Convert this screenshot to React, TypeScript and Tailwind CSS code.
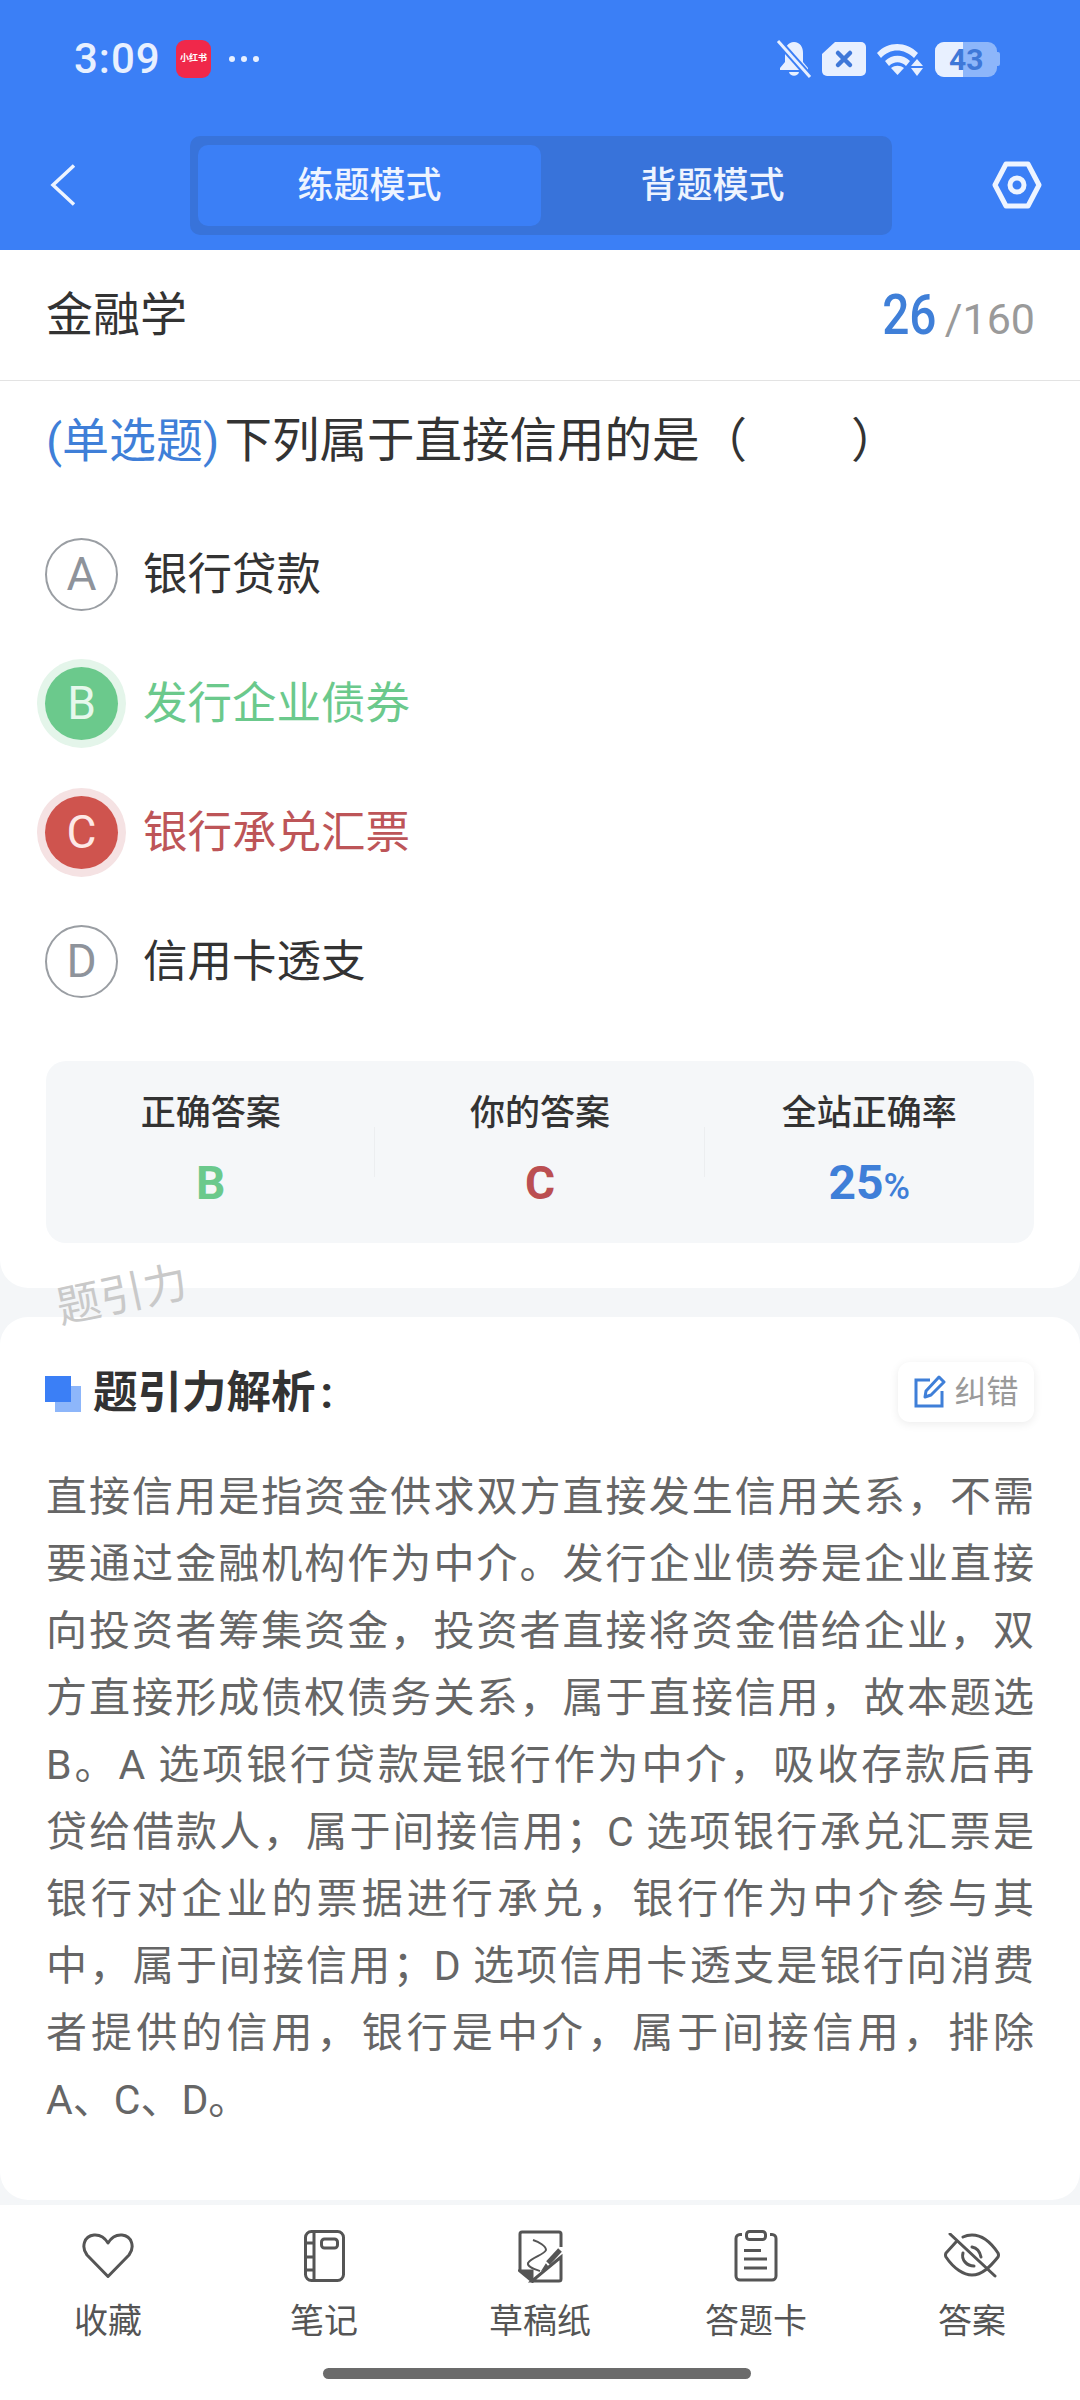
import React from 'react';

const cjk = { fontFamily: 'Roboto, "Noto Sans CJK SC", sans-serif' };

const StatusBar: React.FC = () => (
    <div className="h-[118px] pl-[74px] pr-[80px] pt-[38px] flex items-start justify-between">
        <div className="flex items-center h-[42px]">
            <span className="text-[42px] leading-none font-medium text-[#e8f0ff] w-[86px] tracking-[1px]">3:09</span>
            <div className="ml-[16px] w-[35px] h-[38px] rounded-[9px] bg-[#f0284a] flex items-center justify-center text-[9px] font-bold text-white whitespace-nowrap">小红书</div>
            <div className="ml-[18px] flex gap-[6px]">
                <span className="w-[6px] h-[6px] rounded-full bg-[#e8f0ff]" />
                <span className="w-[6px] h-[6px] rounded-full bg-[#e8f0ff]" />
                <span className="w-[6px] h-[6px] rounded-full bg-[#e8f0ff]" />
            </div>
        </div>
        <div className="flex items-center h-[42px]">
            <svg width="38" height="40" viewBox="0 0 38 40">
                <path d="M19 3c6 0 9 5 9 11v9l5 6v2H5v-2l5-6v-9c0-6 3-11 9-11z" fill="#e8f0ff" />
                <path d="M14 33h10c-1 5-9 5-10 0z" fill="#e8f0ff" />
                <path d="M3 2l32 36" stroke="#3b7ff6" strokeWidth="7" />
                <path d="M3 2l32 36" stroke="#e8f0ff" strokeWidth="3" />
            </svg>
            <svg className="ml-[9px]" width="44" height="34" viewBox="0 0 44 34">
                <path d="M13 0h26a5 5 0 0 1 5 5v24a5 5 0 0 1-5 5H5a5 5 0 0 1-5-5V12z" fill="#e8f0ff" />
                <path d="M16 11l12 12M28 11L16 23" stroke="#3f78d8" strokeWidth="4.500" strokeLinecap="round" />
            </svg>
            <svg className="ml-[10px]" width="48" height="36" viewBox="0 0 48 36">
                <path d="M1 12C12 0 30 0 42 12l-4 5C28 7 14 7 5 17z" fill="#e8f0ff" />
                <path d="M9 20c7-7 18-7 25 0l-4 5c-5-5-12-5-17 0z" fill="#e8f0ff" />
                <path d="M15 27c4-3 9-3 13 0l-6.500 7z" fill="#e8f0ff" />
                <path d="M41 18l6 7H35zM35 27h12l-6 8z" fill="#e8f0ff" />
            </svg>
            <div className="relative ml-[11px] w-[62px] h-[35px] rounded-[9px] bg-[#8db6fa] overflow-hidden">
                <div className="absolute left-0 top-0 bottom-0 w-[28px] bg-[#e8f0ff]" />
                <span className="absolute left-[14px] top-[3px] text-[30px] leading-[30px] font-bold text-[#3f78d8]">43</span>
            </div>
            <div className="w-[3px] h-[14px] rounded-r-[2px] bg-[#8db6fa]" />
        </div>
    </div>
);

const Header: React.FC = () => (
    <div className="h-[250px] bg-[#3b7ff6]">
        <StatusBar />
        <div className="flex items-start">
            <div className="w-[190px] pl-[50px] pt-[46px]">
                <svg width="26" height="42" viewBox="0 0 26 42" fill="none">
                    <path d="M24 1.500L3 21l21 19.500" stroke="#eef4ff" strokeWidth="3.500" />
                </svg>
            </div>
            <div className="mt-[18px] w-[702px] h-[99px] rounded-[10px] bg-[#3873da] px-[8px] py-[9px] flex">
                <div className="w-[343px] rounded-[10px] bg-[#3b7ff6] flex items-center justify-center text-[36px] font-medium text-[#eef4ff]">练题模式</div>
                <div className="flex-1 flex items-center justify-center text-[36px] font-medium text-[#eef4ff]">背题模式</div>
            </div>
            <div className="pl-[100px] pt-[43px]">
                <svg width="50" height="48" viewBox="0 0 50 48" fill="none">
                    <path d="M14 3h22l11 21-11 21H14L3 24z" stroke="#eef4ff" strokeWidth="5" strokeLinejoin="round" />
                    <circle cx="25" cy="24" r="7" stroke="#eef4ff" strokeWidth="5" />
                </svg>
            </div>
        </div>
    </div>
);

const OptionRow: React.FC<{ letter: string; text: string; state?: 'right' | 'wrong' }> = ({ letter, text, state }) => {
    let circle = 'border-2 border-[#9a9ea3] text-[#8e939b]';
    let label = 'text-[#333333]';
    if (state === 'right') {
        circle = 'bg-[#6bc98c] text-[#e6f8ec] shadow-[0_0_0_8px_#e4f5ea]';
        label = 'text-[#6bc98c]';
    }
    if (state === 'wrong') {
        circle = 'bg-[#cf544e] text-[#fde8e6] shadow-[0_0_0_8px_#f5e2e3]';
        label = 'text-[#bd5558]';
    }
    return (
        <div className="h-[129px] flex items-center">
            <div className={`w-[73px] h-[73px] rounded-full flex items-center justify-center text-[46px] ${circle}`}>{letter}</div>
            <div className={`ml-[25px] mt-[2px] text-[44.500px] ${label}`}>{text}</div>
        </div>
    );
};

const StatCell: React.FC<{ title: string; divider?: boolean; children: React.ReactNode }> = ({ title, divider, children }) => (
    <div className="relative flex-1 flex flex-col items-center pt-[28px]">
        <div className="text-[35px] leading-[50px] font-medium text-[#333333]">{title}</div>
        <div className="mt-[19px] leading-[50px]">{children}</div>
        {divider && <div className="absolute right-0 top-[66px] h-[50px] w-[1px] bg-[#eceef0]" />}
    </div>
);

const Tool: React.FC<{ label: string; children: React.ReactNode }> = ({ label, children }) => (
    <div className="flex-1 flex flex-col items-center">
        <div className="h-[60px] flex items-center justify-center">{children}</div>
        <div className="mt-[12px] text-[34px] leading-[46px] text-[#555555]">{label}</div>
    </div>
);

const analysis = [
    '直接信用是指资金供求双方直接发生信用关系，不需',
    '要通过金融机构作为中介。发行企业债券是企业直接',
    '向投资者筹集资金，投资者直接将资金借给企业，双',
    '方直接形成债权债务关系，属于直接信用，故本题选',
    'B。A 选项银行贷款是银行作为中介，吸收存款后再',
    '贷给借款人，属于间接信用；C 选项银行承兑汇票是',
    '银行对企业的票据进行承兑，银行作为中介参与其',
    '中，属于间接信用；D 选项信用卡透支是银行向消费',
    '者提供的信用，银行是中介，属于间接信用，排除',
];

export default function App() {
    return (
        <div className="w-[1080px] h-[2400px] bg-[#f4f6f8] flex flex-col overflow-hidden relative" style={cjk}>
            <Header />

            <div className="bg-white rounded-b-[28px] h-[1038px] flex flex-col">
                <div className="h-[131px] pl-[46px] pr-[45px] flex items-center justify-between border-b border-[#e3e3e3]">
                    <div className="text-[47px] text-[#333333]">金融学</div>
                    <div className="flex items-baseline">
                        <span className="inline-block origin-right scale-x-[.87] text-[55px] font-medium text-[#3f7fd8]">26</span>
                        <span className="ml-[8px] text-[43px] text-[#9a9a9a]">/</span>
                        <span className="text-[43px] text-[#9a9a9a]">160</span>
                    </div>
                </div>

                <div className="px-[46px] pt-[27px]">
                    <div className="text-[47.500px] leading-[66px] text-[#333333] whitespace-pre">
                        <span className="text-[47px] text-[#3f7fd8]">(单选题)</span>
                        <span className="ml-[5px]">下列属于直接信用的是（</span>
                        <span className="inline-block w-[104px]" />
                        <span>）</span>
                    </div>
                    <div className="mt-[36px] ml-[-1px]">
                        <OptionRow letter="A" text="银行贷款" />
                        <OptionRow letter="B" text="发行企业债券" state="right" />
                        <OptionRow letter="C" text="银行承兑汇票" state="wrong" />
                        <OptionRow letter="D" text="信用卡透支" />
                    </div>
                    <div className="mt-[35px] h-[182px] rounded-[20px] bg-[#f5f7f9] flex">
                        <StatCell title="正确答案" divider>
                            <span className="text-[46px] font-bold text-[#6bc98c]">B</span>
                        </StatCell>
                        <StatCell title="你的答案" divider>
                            <span className="text-[46px] font-bold text-[#bb4f52]">C</span>
                        </StatCell>
                        <StatCell title="全站正确率">
                            <span className="text-[48px] font-bold text-[#3f7fd8]">25</span>
                            <span className="text-[36px] font-medium text-[#3f7fd8]">%</span>
                        </StatCell>
                    </div>
                </div>
            </div>

            <div className="absolute left-[56px] top-[1265px] -rotate-[12deg] text-[44px] leading-[60px] text-[#c9c9c9] z-10">题引力</div>

            <div className="mt-[29px] bg-white rounded-[28px] h-[883px] px-[46px]">
                <div className="h-[147px] flex items-center justify-between">
                    <div className="flex items-center pt-[6px]">
                        <div className="relative w-[36px] h-[36px] ml-[-1px]">
                            <div className="absolute right-0 bottom-0 w-[26px] h-[26px] bg-[#8db6fa]" />
                            <div className="absolute left-0 top-0 w-[26px] h-[26px] bg-[#3b7ff6]" />
                        </div>
                        <div className="ml-[12px] text-[44.500px] font-bold text-[#333333]">题引力解析<span className="ml-[5px]">:</span></div>
                    </div>
                    <div className="w-[136px] h-[60px] rounded-[12px] bg-white shadow-[0_2px_10px_rgba(0,0,0,0.08)] flex items-center justify-center mt-[2px]">
                        <svg width="34" height="34" viewBox="0 0 34 34" fill="none">
                            <path d="M17 5H3v26h26V16" stroke="#3f7fd8" strokeWidth="3" />
                            <path d="M12 22l1-6L26 2l5 5-13 13z" stroke="#3f7fd8" strokeWidth="3" strokeLinejoin="round" />
                        </svg>
                        <span className="ml-[7px] text-[32px] text-[#9a9a9a]">纠错</span>
                    </div>
                </div>
                <div className="text-[41px] leading-[67px] text-[#666666]">
                    {analysis.map((line) => (
                        <div key={line} className="h-[67px] text-justify [text-align-last:justify]">{line}</div>
                    ))}
                    <div className="h-[67px]">A、C、D。</div>
                </div>
            </div>

            <div className="mt-[5px] flex-1 bg-white">
                <div className="flex pt-[21px]">
                    <Tool label="收藏">
                        <svg width="52" height="46" viewBox="0 0 52 46" fill="none">
                            <path d="M26 43.500L5 22C-1 14 2 3 12 2c6-.5 11 3 14 8 3-5 8-8.500 14-8 10 1 13 12 7 20z" stroke="#555555" strokeWidth="3" strokeLinejoin="round" />
                        </svg>
                    </Tool>
                    <Tool label="笔记">
                        <svg width="41" height="52" viewBox="0 0 41 52" fill="none" stroke="#555555" strokeWidth="3">
                            <rect x="1.500" y="1.500" width="38" height="49" rx="6" />
                            <path d="M10 1.500v49M1.500 13h8.500M1.500 27h8.500M1.500 40h8.500" />
                            <rect x="17.500" y="9" width="16" height="9" rx="3" />
                        </svg>
                    </Tool>
                    <Tool label="草稿纸">
                        <svg width="45" height="53" viewBox="0 0 45 53" fill="none" stroke="#555555" strokeWidth="3">
                            <path d="M2 41V4a2 2 0 0 1 2-2h37a2 2 0 0 1 2 2v13M43 27v22a2 2 0 0 1-2 2H14z" />
                            <path d="M2 41l12 10V41z" fill="#555555" />
                            <path d="M15 10c6 2 13 6 13 10-2 5-14 7-18 13-1 4 6 6 12 8" strokeWidth="2" />
                            <path d="M42 20L30 33" strokeWidth="5" />
                            <path d="M28 35l-2.500 4 4-2z" strokeWidth="2" />
                        </svg>
                    </Tool>
                    <Tool label="答题卡">
                        <svg width="44" height="52" viewBox="0 0 44 52" fill="none" stroke="#555555" strokeWidth="3">
                            <path d="M8 4.500H6a4 4 0 0 0-4 4V46a4 4 0 0 0 4 4h32a4 4 0 0 0 4-4V8.500a4 4 0 0 0-4-4h-2" />
                            <rect x="12.500" y="1.500" width="19" height="8" rx="3" />
                            <path d="M10 20.500h17M10 29h23M10 38h23" />
                        </svg>
                    </Tool>
                    <Tool label="答案">
                        <svg width="56" height="46" viewBox="0 0 56 46" fill="none" stroke="#555555" strokeWidth="3" strokeLinecap="round">
                            <path d="M12 9L2 20q-1 2 0 4c8 12 18 18 26 18 10 0 18-8 26-18q1-2 0-4C46 8 38 2 28 2q-5 0-9 2" />
                            <path d="M19 20c-2 7 4 13 11 13" />
                            <path d="M28 14c5 1 8 5 9 10" />
                            <path d="M6 1l45 42" />
                        </svg>
                    </Tool>
                </div>
                <div className="mt-[24px] ml-[323px] w-[428px] h-[11px] rounded-full bg-[#6b6b6b]" />
            </div>
        </div>
    );
}
